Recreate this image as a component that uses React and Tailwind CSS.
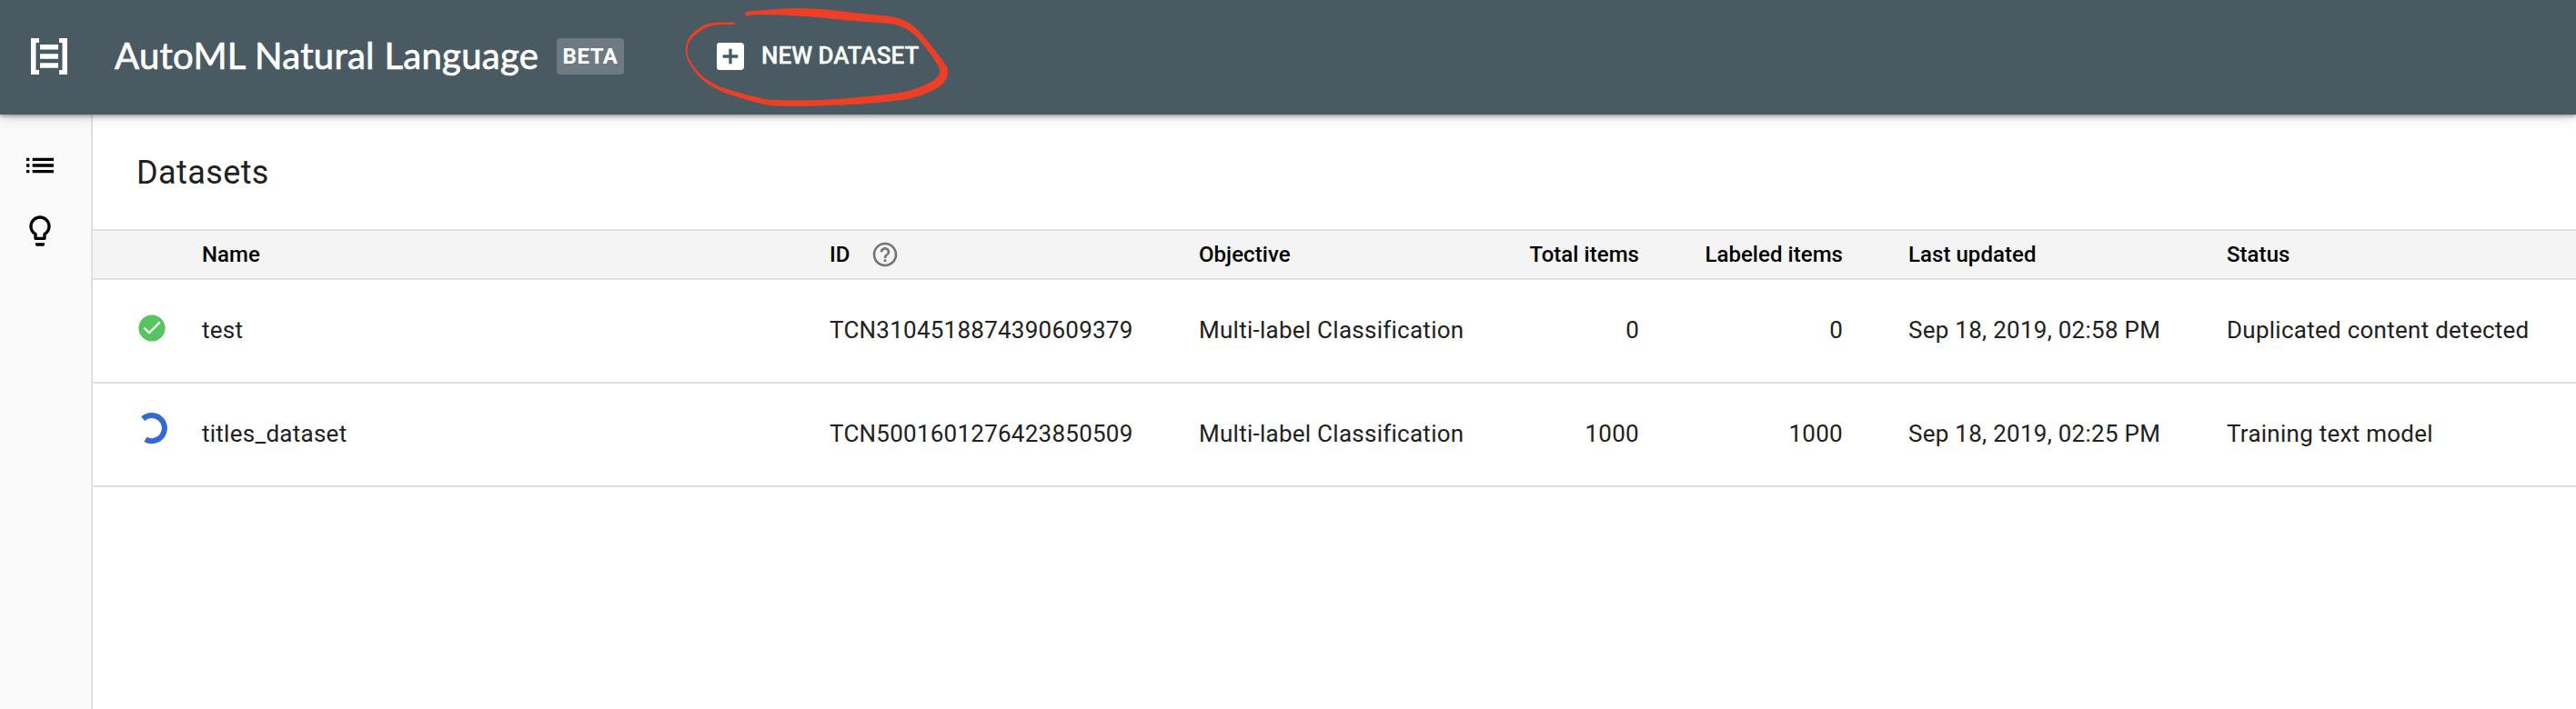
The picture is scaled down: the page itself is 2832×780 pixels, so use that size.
import React from "react";
import { MdList, MdLightbulbOutline, MdAddBox, MdHelpOutline } from "react-icons/md";

const rows = [
  { state: "done", name: "test", id: "TCN3104518874390609379", objective: "Multi-label Classification", total: "0", labeled: "0", updated: "Sep 18, 2019, 02:58 PM", status: "Duplicated content detected" },
  { state: "busy", name: "titles_dataset", id: "TCN5001601276423850509", objective: "Multi-label Classification", total: "1000", labeled: "1000", updated: "Sep 18, 2019, 02:25 PM", status: "Training text model" },
];

const grid = "grid grid-cols-[120px_690px_406px_344px_140px_224px_72px_350px_384px] items-center";

function Logo() {
  return (
    <svg className="h-10 w-10" viewBox="0 0 40 40" fill="#fff">
      <path d="M0 0h9v5H5.5v30H9v5H0z" />
      <path d="M40 0h-9v5h3.5v30H31v5h9z" />
      <path d="M10 7h20v5.4H10zM10 17.3h20v5.4H10zM10 27.3h20v5.4H10z" />
    </svg>
  );
}

// Hand-drawn red marker loop around the "New dataset" action
function Scribble() {
  return (
    <svg className="pointer-events-none absolute left-[730px] top-0 h-[126px] w-[340px]" viewBox="0 0 1020 378" fill="#ec3f25">
      <path d="M267 48C266 41 272 38 285 37C340 33 400 26 455 27C510 28 560 34 620 41L740 53C785 58 812 74 838 100C868 132 898 172 922 204C932 217 936 224 936 238C936 258 926 276 902 290C872 307 835 320 800 328C730 339 590 349 480 350C430 351 390 351 350 348C310 341 240 321 190 302C145 281 120 262 98 232C80 206 71 185 71 165C72 140 82 118 105 100C125 85 142 77 165 75C190 73 210 74 232 74C236 76 236 79 232 81C210 81 190 81 167 83C145 86 130 94 112 108C88 126 78 142 77 165C77 183 84 200 100 222C122 252 150 272 190 288C240 304 300 322 350 329C430 333 540 330 620 323C680 317 740 313 790 304C835 292 865 280 885 268C903 258 910 244 909 232C908 222 902 213 890 196C866 161 838 122 812 104C790 88 768 80 738 77L600 67C550 62 500 54 450 53C400 50 345 47 300 48C285 49 278 53 272 52C269 51 268 50 267 48Z" />
    </svg>
  );
}

function StateIcon({ state }) {
  if (state === "done") {
    return (
      <svg className="mb-[5px] ml-[47px] h-9 w-9" viewBox="0 0 36 36" fill="none">
        <circle cx="18" cy="18" r="14.6" fill="#58c45f" />
        <path d="M9.6 17.8l5.4 5.4 11.8-11.8" stroke="#fff" strokeWidth="2.2" />
      </svg>
    );
  }
  return (
    <svg className="mb-3 ml-[47px] h-9 w-9" viewBox="0 0 36 36" fill="none">
      <path d="M8.2 7.7A14.1 14.1 0 1 1 10.9 30.3" stroke="#3469cf" strokeWidth="6" />
    </svg>
  );
}

export default function App() {
  return (
    <div className="flex h-[780px] w-[2832px] flex-col overflow-hidden bg-white font-['Roboto',sans-serif] text-[#212121]">
      <header className="relative z-10 flex h-[126px] shrink-0 items-center bg-[#495a63] pb-0.5 pl-[34px] text-white shadow-[0_2px_4px_rgba(0,0,0,0.32),0_0_16px_rgba(0,0,0,0.22)]">
        <Logo />
        <h1 className="ml-[52px] w-[469px] whitespace-nowrap pb-[3px] font-['Lato',sans-serif] text-[40px] font-normal leading-[48px] tracking-[0.3px] [-webkit-text-stroke:0.7px_white]">AutoML Natural Language</h1>
        <span className="ml-[17px] flex h-10 w-[74px] items-center justify-center rounded bg-[#6e7a82] text-2xl font-bold tracking-[0.5px]">BETA</span>
        <button className="ml-[97px] flex items-center gap-3.5">
          <MdAddBox className="size-10" />
          <span className="whitespace-nowrap pb-0.5 text-[26px] font-medium leading-8 [-webkit-text-stroke:0.3px_white]">NEW DATASET</span>
        </button>
        <Scribble />
      </header>
      <div className="flex min-h-0 grow">
        <nav className="flex w-[102px] shrink-0 flex-col gap-8 border-r-2 border-[#e0e0e0] bg-[#fafafa] pl-6 pt-9 text-black">
          <MdList className="size-10" />
          <MdLightbulbOutline className="size-10" />
        </nav>
        <main className="min-w-0 grow">
          <div className="flex h-[126px] items-center pl-12 pt-0.5">
            <h2 className="text-[36px] leading-[44px] tracking-[0.4px]">Datasets</h2>
          </div>
          <div className={`${grid} h-14 border-y-2 border-[#e0e0e0] bg-[#f4f4f4] text-2xl font-medium leading-8 tracking-[0.05px] text-black`}>
            <span />
            <span>Name</span>
            <span className="flex items-center gap-[22px]">
              ID
              <MdHelpOutline className="size-8 text-[#757575]" />
            </span>
            <span>Objective</span>
            <span className="text-right">Total items</span>
            <span className="text-right">Labeled items</span>
            <span />
            <span>Last updated</span>
            <span>Status</span>
          </div>
          {rows.map((r) => (
            <div key={r.id} className={`${grid} h-[114px] border-b-2 border-[#e0e0e0] pb-0.5 text-[26px] leading-8 tracking-[0.26px]`}>
              <StateIcon state={r.state} />
              <span>{r.name}</span>
              <span className="tracking-[0.24px]">{r.id}</span>
              <span>{r.objective}</span>
              <span className="text-right">{r.total}</span>
              <span className="text-right">{r.labeled}</span>
              <span />
              <span>{r.updated}</span>
              <span>{r.status}</span>
            </div>
          ))}
        </main>
      </div>
    </div>
  );
}
